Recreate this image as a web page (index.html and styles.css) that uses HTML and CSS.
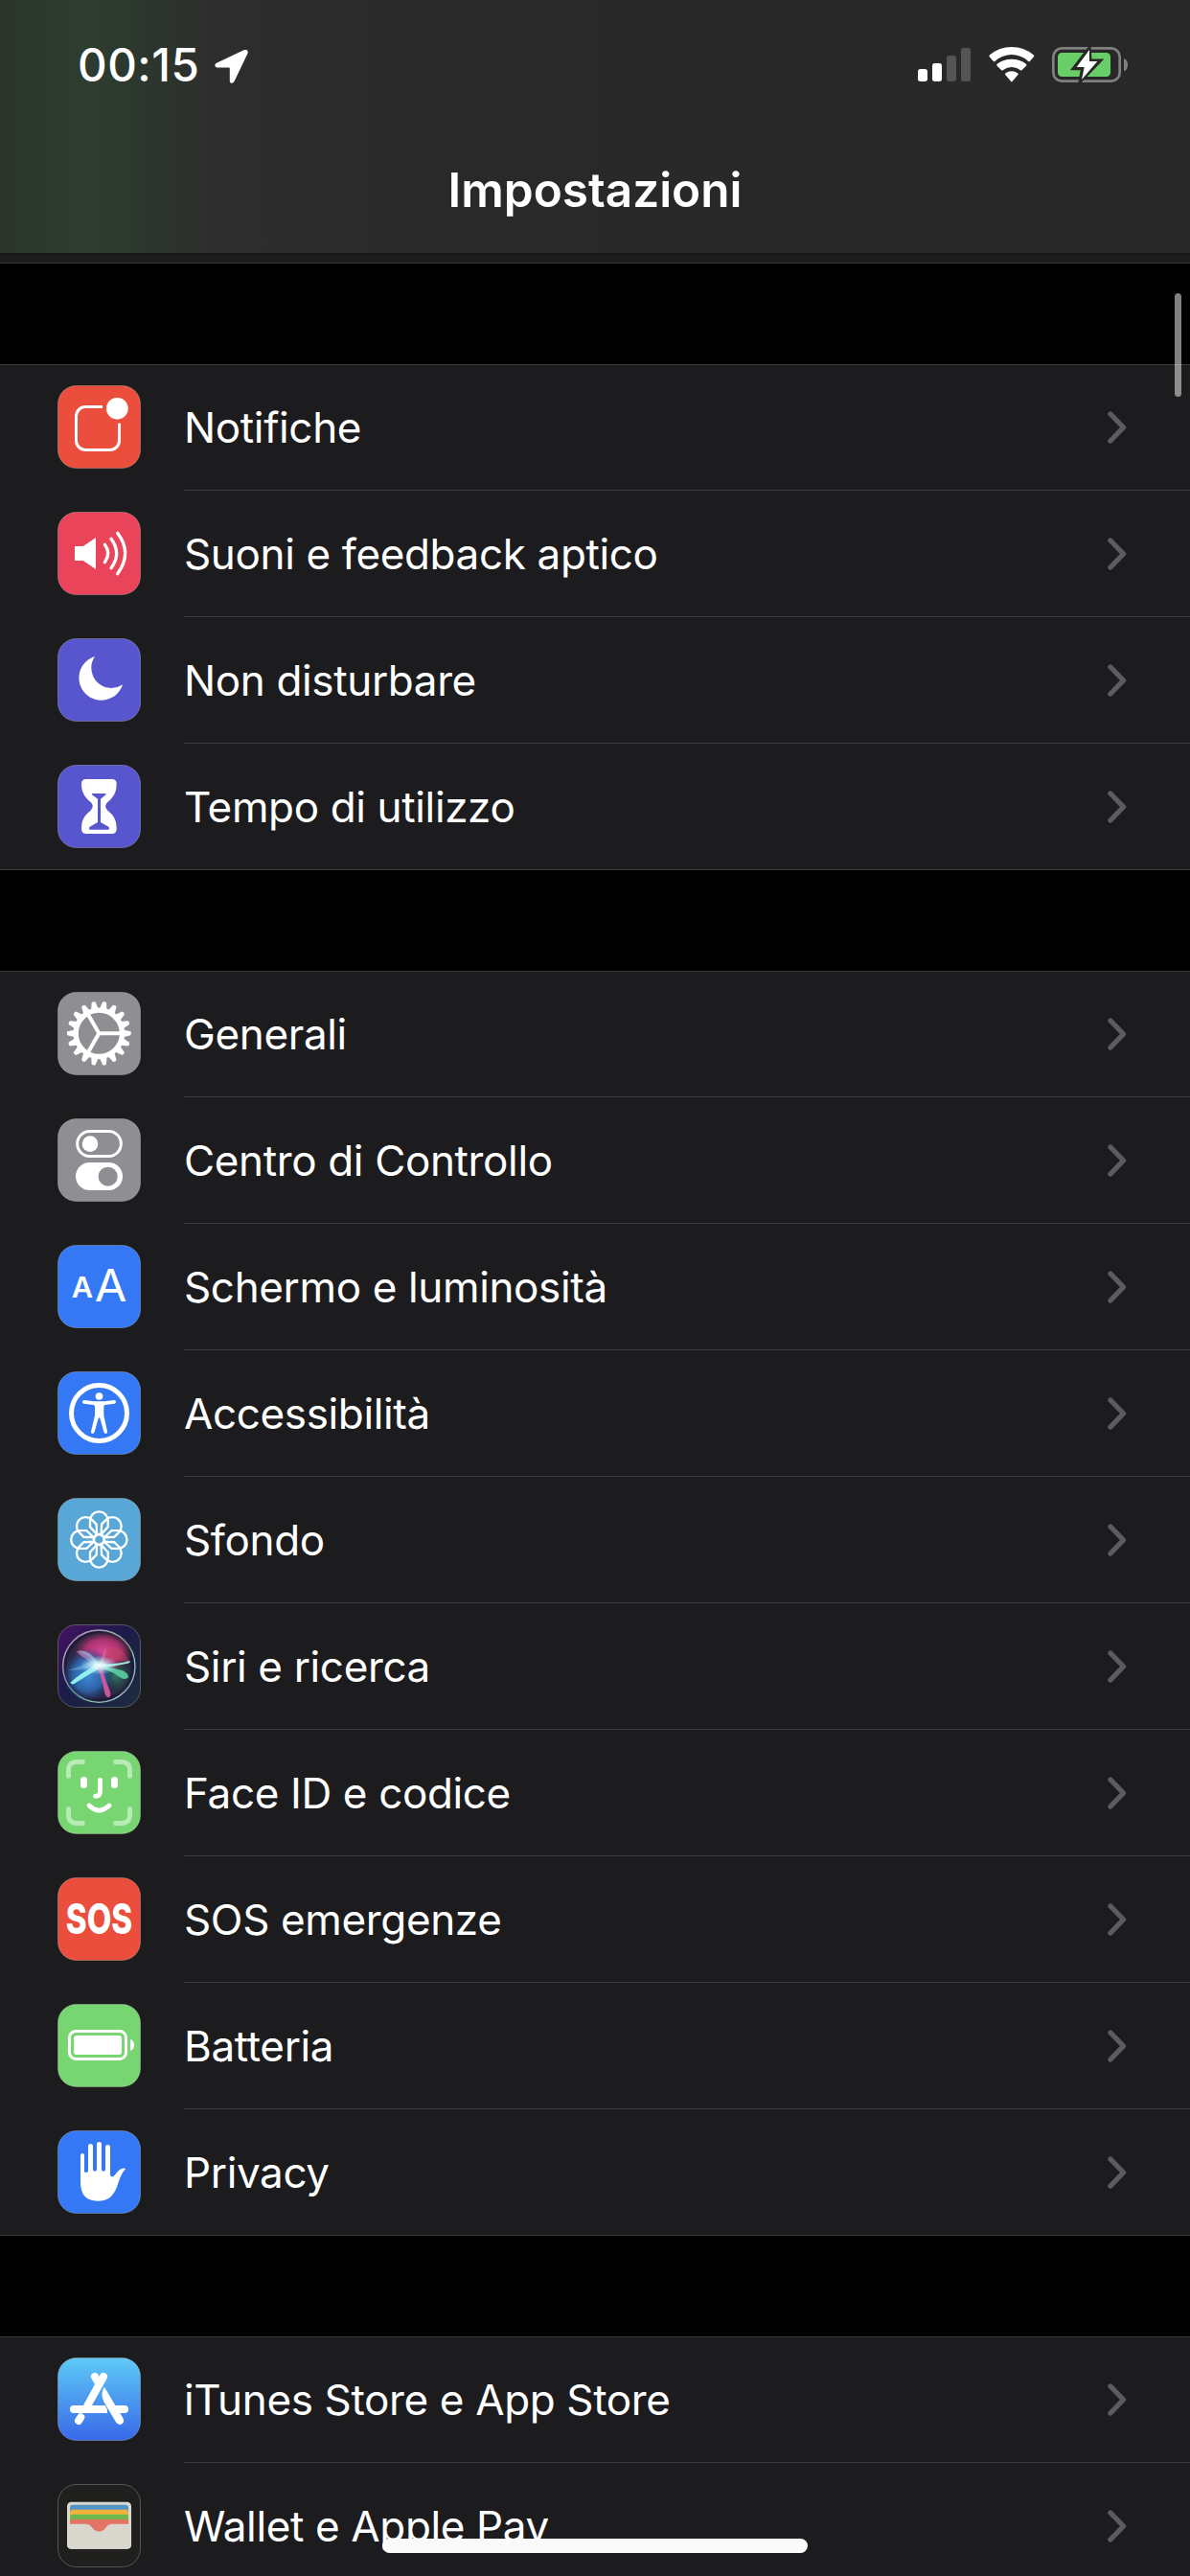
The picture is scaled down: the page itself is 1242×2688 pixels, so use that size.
FILE: index.html
```html
<!DOCTYPE html>
<html lang="it">
<head>
    <meta charset="UTF-8">
    <meta name="viewport" content="width=device-width, initial-scale=1.0">
    <title>Impostazioni</title>
    <link rel="stylesheet" href="styles.css">
</head>
<body>
    <svg class="defs" width="0" height="0">
        <defs>
            <symbol id="chevron" viewBox="0 0 20 34">
                <path d="M3 3L16.5 17L3 31" fill="none" stroke="#5b5b60" stroke-width="5.4" stroke-linecap="round" stroke-linejoin="round"/>
            </symbol>
            <path id="tooth" d="M119 52L124 31Q130 27 136 31L141 52ZM119 208L124 229Q130 233 136 229L141 208Z"/>
            <path id="petal" d="M102 71a28 28 0 0 1 56 0V91L136 115H124L102 91Z"/>
            <linearGradient id="store" x1="0" y1="0" x2="0" y2="1">
                <stop offset="0" stop-color="#5fcaf8"/>
                <stop offset="1" stop-color="#3869e8"/>
            </linearGradient>
            <linearGradient id="siri-bg" x1="0" y1="0" x2="1" y2="1">
                <stop offset="0" stop-color="#471163"/>
                <stop offset="0.45" stop-color="#1b1c48"/>
                <stop offset="1" stop-color="#1d2c3e"/>
            </linearGradient>
            <linearGradient id="siri-ring" x1="0" y1="0" x2="1" y2="1">
                <stop offset="0" stop-color="#c58ac8"/>
                <stop offset="0.6" stop-color="#7fc99a"/>
                <stop offset="1" stop-color="#a5b4de"/>
            </linearGradient>
            <radialGradient id="siri-pink">
                <stop offset="0" stop-color="#d8489c"/>
                <stop offset="0.6" stop-color="#b93573" stop-opacity="0.9"/>
                <stop offset="1" stop-color="#8f2b55" stop-opacity="0"/>
            </radialGradient>
            <radialGradient id="siri-blue">
                <stop offset="0" stop-color="#3f8ed8"/>
                <stop offset="0.6" stop-color="#2f68b0" stop-opacity="0.9"/>
                <stop offset="1" stop-color="#22407c" stop-opacity="0"/>
            </radialGradient>
            <radialGradient id="siri-green">
                <stop offset="0" stop-color="#2f7d62"/>
                <stop offset="1" stop-color="#1f4a44" stop-opacity="0"/>
            </radialGradient>
            <radialGradient id="siri-glow">
                <stop offset="0" stop-color="#ffffff"/>
                <stop offset="0.3" stop-color="#dffbff" stop-opacity="0.85"/>
                <stop offset="1" stop-color="#9fe6ff" stop-opacity="0"/>
            </radialGradient>
        </defs>
    </svg>

    <header>
        <div class="status-bar">
            <div class="clock">
                <span class="time">00:15</span>
                <svg class="location" viewBox="0 0 35 36">
                    <path d="M30.500 1.200Q35.500-.2 34.600 4.500L20.500 34Q19 36.500 16.800 35.500Q15.800 34.800 15.800 33.500V20.500Q15.800 19.500 14.800 19.500H2.500Q.5 19.300.3 17.300Q.2 15.600 2 14.800Z" fill="#fff"/>
                </svg>
            </div>
            <div class="indicators">
                <svg class="signal" viewBox="0 0 165 111">
                    <rect x="0" y="69" width="30" height="39" rx="8" fill="#fff"/>
                    <rect x="45" y="51" width="30" height="57" rx="8" fill="#fff"/>
                    <rect x="90" y="27" width="30" height="81" rx="8" fill="#545454"/>
                    <rect x="135" y="3" width="30" height="105" rx="8" fill="#545454"/>
                </svg>
                <svg class="wifi" viewBox="0 0 144 111">
                    <g fill="#fff">
                        <path d="M2 31Q0 28 3 25Q33 0 71.500 0T140 25Q143 28 141 31L129 44Q126 47 123 44Q100 24 71.500 24T20 44Q17 47 14 44Z"/>
                        <path d="M26 59Q23 56 26 53Q46 38 71.500 38T117 53Q120 56 117 59L104 72Q101 75 98 72Q86 63 71.500 63T45 72Q42 75 39 72Z"/>
                        <path d="M51 86Q50 84 53 82Q61 76 71.500 76T90 82Q93 84 92 86L74 107Q71.500 110 69 107Z"/>
                    </g>
                </svg>
                <svg class="charge" viewBox="0 0 237 111">
                    <rect x="4" y="4" width="208" height="103" rx="27" fill="none" stroke="#808080" stroke-width="8"/>
                    <path d="M225 36Q237 41 237 56T225 76Z" fill="#808080"/>
                    <rect x="18" y="18" width="165" height="75" rx="13" fill="#68ce67"/>
                    <path d="M116 7L70 66H97L90 104L148 44H118Z" fill="#fff" stroke="#282828" stroke-width="13"/>
                    <path d="M117 9L77 63H101L93 102L142 45H117Z" fill="#fff"/>
                </svg>
            </div>
        </div>
        <h1>Impostazioni</h1>
    </header>

    <main>
        <div class="previous"></div>

        <section>
            <div class="row">
                <svg class="icon" viewBox="0 0 261 261">
                    <rect class="tile red" x="1.500" y="1.500" width="258" height="258" rx="57"/>
                    <path d="M141 67.500H88A29.500 29.500 0 0 0 58.500 97V173A29.500 29.500 0 0 0 88 202.500H164A29.500 29.500 0 0 0 193.500 173V119" fill="none" stroke="#fff" stroke-width="9"/>
                    <circle cx="187" cy="73" r="34" fill="#fff"/>
                </svg>
                <div class="label"><span>Notifiche</span><svg class="chevron"><use href="#chevron"/></svg></div>
            </div>
            <div class="row">
                <svg class="icon" viewBox="0 0 261 261">
                    <rect class="tile pink" x="1.500" y="1.500" width="258" height="258" rx="57"/>
                    <path d="M54 108H80L120 81V180L80 153H54Z" fill="#fff"/>
                    <path d="M148 103Q169 130 148 158M168 85Q202 131 168 176M188 67Q236 130 188 194" fill="none" stroke="#fff" stroke-width="10" stroke-linecap="round"/>
                </svg>
                <div class="label"><span>Suoni e feedback aptico</span><svg class="chevron"><use href="#chevron"/></svg></div>
            </div>
            <div class="row">
                <svg class="icon" viewBox="0 0 261 261">
                    <rect class="tile purple" x="1.500" y="1.500" width="258" height="258" rx="57"/>
                    <path d="M117 57A70 70 0 1 0 204 145A63 63 0 0 1 117 57Z" fill="#fff"/>
                </svg>
                <div class="label"><span>Non disturbare</span><svg class="chevron"><use href="#chevron"/></svg></div>
            </div>
            <div class="row">
                <svg class="icon" viewBox="0 0 261 261">
                    <rect class="tile purple" x="1.500" y="1.500" width="258" height="258" rx="57"/>
                    <path d="M90 45H170Q185 45 185 60C185 90 172 105 157 117Q143 130 157 143C174 156 185 170 185 201Q185 216 170 216H90Q75 216 75 201C75 170 87 156 104 143Q117 130 104 117C89 105 75 90 75 60Q75 45 90 45Z" fill="#fff"/>
                    <path d="M108 90H151V94L135 107V180L160 194Q163 197 161 203H100Q98 197 101 194L126 180V107L108 94Z" fill="#5856ce"/>
                </svg>
                <div class="label"><span>Tempo di utilizzo</span><svg class="chevron"><use href="#chevron"/></svg></div>
            </div>
        </section>

        <section>
            <div class="row">
                <svg class="icon" viewBox="0 0 261 261">
                    <rect class="tile gray" x="1.500" y="1.500" width="258" height="258" rx="57"/>
                    <g fill="#fff">
                        <use href="#tooth" transform="rotate(10 130 130)"/>
                        <use href="#tooth" transform="rotate(30 130 130)"/>
                        <use href="#tooth" transform="rotate(50 130 130)"/>
                        <use href="#tooth" transform="rotate(70 130 130)"/>
                        <use href="#tooth" transform="rotate(90 130 130)"/>
                        <use href="#tooth" transform="rotate(110 130 130)"/>
                        <use href="#tooth" transform="rotate(130 130 130)"/>
                        <use href="#tooth" transform="rotate(150 130 130)"/>
                        <use href="#tooth" transform="rotate(170 130 130)"/>
                    </g>
                    <circle cx="130" cy="130" r="72.500" fill="none" stroke="#fff" stroke-width="16"/>
                    <path d="M198 130H130L96 71M130 130L96 189" fill="none" stroke="#fff" stroke-width="12"/>
                </svg>
                <div class="label"><span>Generali</span><svg class="chevron"><use href="#chevron"/></svg></div>
            </div>
            <div class="row">
                <svg class="icon" viewBox="0 0 261 261">
                    <rect class="tile gray" x="1.500" y="1.500" width="258" height="258" rx="57"/>
                    <rect x="62" y="40.500" width="137" height="78" rx="39" fill="none" stroke="#fff" stroke-width="9"/>
                    <circle cx="102" cy="80" r="25" fill="#fff"/>
                    <rect x="57" y="138" width="147" height="87" rx="43.500" fill="#fff"/>
                    <circle cx="158" cy="182" r="30" fill="#8e8e93"/>
                </svg>
                <div class="label"><span>Centro di Controllo</span><svg class="chevron"><use href="#chevron"/></svg></div>
            </div>
            <div class="row">
                <svg class="icon" viewBox="0 0 261 261">
                    <rect class="tile blue" x="1.500" y="1.500" width="258" height="258" rx="57"/>
                    <text x="44" y="165" font-size="91" font-weight="600" textLength="67" lengthAdjust="spacingAndGlyphs">A</text>
                    <text x="116" y="177" font-size="141" font-weight="400" textLength="101" lengthAdjust="spacingAndGlyphs">A</text>
                </svg>
                <div class="label"><span>Schermo e luminosità</span><svg class="chevron"><use href="#chevron"/></svg></div>
            </div>
            <div class="row">
                <svg class="icon" viewBox="0 0 261 261">
                    <rect class="tile blue" x="1.500" y="1.500" width="258" height="258" rx="57"/>
                    <circle cx="130.500" cy="130.500" r="87" fill="none" stroke="#fff" stroke-width="15"/>
                    <circle cx="130.500" cy="78" r="11.500" fill="#fff"/>
                    <path d="M83 90L115 94H146L178 90Q183 90 183 95Q183 100 179 101L148 105Q144 107 145 113V138L156 188Q157 194 152 195Q147 195 145 190L133 147Q130.500 143 128 147L116 190Q114 195 109 195Q104 194 105 188L117 138V113Q118 107 113 105L82 101Q78 100 78 95Q78 90 83 90Z" fill="#fff"/>
                </svg>
                <div class="label"><span>Accessibilità</span><svg class="chevron"><use href="#chevron"/></svg></div>
            </div>
            <div class="row">
                <svg class="icon" viewBox="0 0 261 261">
                    <rect class="tile sky" x="1.500" y="1.500" width="258" height="258" rx="57"/>
                    <g fill="none" stroke="#fff" stroke-width="7">
                        <use href="#petal"/>
                        <use href="#petal" transform="rotate(45 130 130.500)"/>
                        <use href="#petal" transform="rotate(90 130 130.500)"/>
                        <use href="#petal" transform="rotate(135 130 130.500)"/>
                        <use href="#petal" transform="rotate(180 130 130.500)"/>
                        <use href="#petal" transform="rotate(225 130 130.500)"/>
                        <use href="#petal" transform="rotate(270 130 130.500)"/>
                        <use href="#petal" transform="rotate(315 130 130.500)"/>
                        <circle cx="130" cy="130.500" r="17"/>
                    </g>
                </svg>
                <div class="label"><span>Sfondo</span><svg class="chevron"><use href="#chevron"/></svg></div>
            </div>
            <div class="row">
                <svg class="icon" viewBox="0 0 261 261">
                    <rect class="tile" x="1.500" y="1.500" width="258" height="258" rx="57" fill="url(#siri-bg)"/>
                    <circle cx="130" cy="131" r="113" fill="#2a2542" stroke="url(#siri-ring)" stroke-width="4"/>
                    <circle cx="130" cy="131" r="105" fill="none" stroke="#1f1b36" stroke-width="8"/>
                    <ellipse cx="184" cy="160" rx="54" ry="62" fill="url(#siri-green)"/>
                    <ellipse cx="143" cy="86" rx="92" ry="64" fill="url(#siri-pink)"/>
                    <ellipse cx="96" cy="158" rx="80" ry="84" fill="url(#siri-blue)"/>
                    <path d="M60 86Q95 70 130 125L153 68Q156 100 138 130Q90 115 60 86Z" fill="#e59bd4" opacity="0.5"/>
                    <path d="M58 84Q105 75 130 128Q80 145 34 143Q80 130 110 112Q90 90 58 84Z" fill="#7ec4e8" opacity="0.45"/>
                    <path d="M136 128Q180 105 224 118Q205 60 150 72Z" fill="#c94560" opacity="0.45"/>
                    <path d="M128 124Q190 126 226 114Q230 120 220 122Q180 130 135 138Z" fill="#9de9dc"/>
                    <path d="M125 125Q75 150 40 182Q44 190 52 186Q90 162 135 136Z" fill="#8ff0ee"/>
                    <path d="M130 124Q170 138 205 145Q222 154 222 166Q212 176 198 167Q170 145 126 136Z" fill="#5fd6a8" opacity="0.85"/>
                    <path d="M122 128Q140 170 148 215Q154 232 163 228Q171 220 160 198Q145 165 139 128Z" fill="#dc5aa5" opacity="0.9"/>
                    <ellipse cx="130" cy="128" rx="60" ry="30" fill="url(#siri-glow)"/>
                </svg>
                <div class="label"><span>Siri e ricerca</span><svg class="chevron"><use href="#chevron"/></svg></div>
            </div>
            <div class="row">
                <svg class="icon" viewBox="0 0 261 261">
                    <rect class="tile green" x="1.500" y="1.500" width="258" height="258" rx="57"/>
                    <path d="M34.500 79V58Q36 36 58 34.500H79M182 34.500H203Q225 36 226.500 58V79M226.500 182V203Q225 225 203 226.500H182M79 226.500H58Q36 225 34.500 203V182" fill="none" stroke="#b8ebb6" stroke-width="15" stroke-linecap="round"/>
                    <rect x="72" y="81" width="21" height="36" rx="10.500" fill="#fff"/>
                    <rect x="168" y="81" width="21" height="36" rx="10.500" fill="#fff"/>
                    <path d="M133.500 91V127Q133.500 142 118.500 142M99 171Q130 201 162 171" fill="none" stroke="#fff" stroke-width="14.500" stroke-linecap="round"/>
                </svg>
                <div class="label"><span>Face ID e codice</span><svg class="chevron"><use href="#chevron"/></svg></div>
            </div>
            <div class="row">
                <svg class="icon" viewBox="0 0 261 261">
                    <rect class="tile red" x="1.500" y="1.500" width="258" height="258" rx="57"/>
                    <text transform="translate(130.500 178) scale(0.76 1)" text-anchor="middle" font-size="131" font-weight="800">SOS</text>
                </svg>
                <div class="label"><span>SOS emergenze</span><svg class="chevron"><use href="#chevron"/></svg></div>
            </div>
            <div class="row">
                <svg class="icon" viewBox="0 0 261 261">
                    <rect class="tile green" x="1.500" y="1.500" width="258" height="258" rx="57"/>
                    <rect x="37.500" y="85.500" width="177" height="87" rx="20" fill="none" stroke="#fff" stroke-width="9"/>
                    <rect x="51" y="99" width="150" height="60" rx="10" fill="#fff"/>
                    <path d="M228 111Q240 116 240 129T228 147Z" fill="#fff"/>
                </svg>
                <div class="label"><span>Batteria</span><svg class="chevron"><use href="#chevron"/></svg></div>
            </div>
            <div class="row">
                <svg class="icon" viewBox="0 0 261 261">
                    <rect class="tile blue" x="1.500" y="1.500" width="258" height="258" rx="57"/>
                    <path d="M72 160V78Q72 72 78 72Q84 72 84 78V128Q84 132 90 132Q96 132 96 126V50Q96 42 103.500 42Q111 42 111 50V122Q111 128 117 128Q123 128 123 122V44Q123 36 130.500 36Q138 36 138 44V122Q138 128 144 128Q150 128 150 122V53Q150 45 157.500 45Q165 45 165 53V138Q166 147 173 145Q178 143 184 134Q194 120 204 119Q212 118 213 121Q200 134 190 165C178 205 160 221 128 221C92 221 72 205 72 160Z" fill="#fff"/>
                </svg>
                <div class="label"><span>Privacy</span><svg class="chevron"><use href="#chevron"/></svg></div>
            </div>
        </section>

        <section>
            <div class="row">
                <svg class="icon" viewBox="0 0 261 261">
                    <rect class="tile" x="1.500" y="1.500" width="258" height="258" rx="57" fill="url(#store)"/>
                    <g fill="none" stroke="#fff" stroke-width="24" stroke-linecap="round">
                        <path d="M117 60L131 84M144 60L92 154M66 198L73 187"/>
                    </g>
                    <path d="M51 150H149Q157 160 156 174H51A12 12 0 0 1 51 150Z" fill="#fff"/>
                    <path d="M147 92Q132 112 146 140L184 204Q193 214 202 208Q210 202 206 191L196 174H210A12 12 0 0 0 210 150H181Z" fill="#fff"/>
                </svg>
                <div class="label"><span>iTunes Store e App Store</span><svg class="chevron"><use href="#chevron"/></svg></div>
            </div>
            <div class="row">
                <svg class="icon" viewBox="0 0 261 261">
                    <rect class="tile dark" x="1.500" y="1.500" width="258" height="258" rx="57"/>
                    <rect x="30" y="56" width="201" height="147" rx="13" fill="#dad7cf"/>
                    <path d="M39 125V74Q39 65 48 65H213Q222 65 222 74V125Z" fill="#5095c6"/>
                    <path d="M39 125V89Q39 80 48 80H213Q222 80 222 89V125Z" fill="#f4b03e"/>
                    <path d="M39 125V104Q39 95 48 95H213Q222 95 222 104V125Z" fill="#6aba4c"/>
                    <path d="M39 125V119Q39 110 48 110H213Q222 110 222 119V152H39Z" fill="#e27565"/>
                    <path d="M30 125H88Q101 125 108 136Q117 149 130 149Q143 149 152 136Q159 125 172 125H231V190Q231 203 218 203H43Q30 203 30 190Z" fill="#dad7cf"/>
                </svg>
                <div class="label"><span>Wallet e Apple Pay</span><svg class="chevron"><use href="#chevron"/></svg></div>
            </div>
        </section>
    </main>

    <div class="scrollbar"></div>
    <div class="home-indicator"></div>
</body>
</html>
```
FILE: styles.css
```css
* {
    box-sizing: border-box;
}
html {
    background: #000;
}
body {
    position: relative;
    width: 1242px;
    height: 2688px;
    margin: 0;
    overflow: hidden;
    background: #000;
    color: #fff;
    font-family: Inter, "Liberation Sans", sans-serif;
}
svg {
    display: block;
    flex: none;
}
.defs {
    position: absolute;
}
header {
    height: 265px;
    background: linear-gradient(90deg, #2b352c 0, #2c3b2e 60px, #2d3d2f 90px, #2c392e 135px, #2d312d 190px, #2d2d2d 250px, #292929 480px, #282828 100%);
    border-bottom: 1px solid #171717;
}
.status-bar {
    display: flex;
    justify-content: space-between;
    height: 132px;
    padding: 49px 65px 0 81px;
}
.clock {
    display: flex;
    height: 40px;
}
.time {
    width: 143px;
    font-size: 47.5px;
    font-weight: 550;
    line-height: 38px;
    letter-spacing: 0.5px;
}
.location {
    width: 35px;
    height: 36px;
    margin-top: 2px;
}
.indicators {
    display: flex;
    gap: 18.5px;
}
.signal {
    width: 55px;
    height: 37px;
}
.wifi {
    width: 48px;
    height: 37px;
}
.charge {
    width: 79px;
    height: 37px;
}
h1 {
    margin: 0;
    font-size: 49.5px;
    font-weight: 570;
    line-height: 132px;
    text-align: center;
}
/* Bottom edge of the group scrolled under the header */
.previous {
    height: 10px;
    background: #1c1c1e;
    border-bottom: 1px solid #3a3a3c;
}
section {
    margin-top: 105px;
    background: #1c1c1e;
    border-top: 1px solid #3a3a3c;
    border-bottom: 1px solid #3a3a3c;
}
.row {
    display: flex;
    height: 132px;
    padding-left: 60px;
    gap: 45px;
}
.row:first-child {
    margin-top: -1px;
}
.row:last-child {
    height: 131px;
}
.icon {
    width: 87px;
    height: 87px;
    margin-top: 22px;
}
.icon text {
    fill: #fff;
}
.label {
    flex: 1;
    display: flex;
    justify-content: space-between;
    align-items: center;
    padding-right: 66px;
    border-bottom: 1px solid #3a3a3c;
    font-size: 44px;
    line-height: 60px;
    letter-spacing: -0.36px;
}
.label span {
    padding-top: 1px;
}
.row:last-child .label {
    border-bottom: none;
}
.chevron {
    width: 20px;
    height: 34px;
}

/* Icon backgrounds */
.tile {
    stroke: rgba(255, 255, 255, 0.25);
    stroke-width: 3px;
}
.red {
    fill: #eb4e3d;
}
.pink {
    fill: #ea445a;
}
.purple {
    fill: #5856ce;
}
.gray {
    fill: #8e8e93;
}
.blue {
    fill: #3478f6;
}
.sky {
    fill: #59a7d7;
}
.green {
    fill: #78d672;
}
.dark {
    fill: #1f1f1e;
}

.scrollbar {
    position: absolute;
    top: 306px;
    right: 9px;
    width: 7px;
    height: 108px;
    border-radius: 4px;
    background: rgba(255, 255, 255, 0.5);
}
.home-indicator {
    position: absolute;
    left: 399px;
    bottom: 24px;
    width: 444px;
    height: 15px;
    border-radius: 8px;
    background: #fafafa;
}
```
